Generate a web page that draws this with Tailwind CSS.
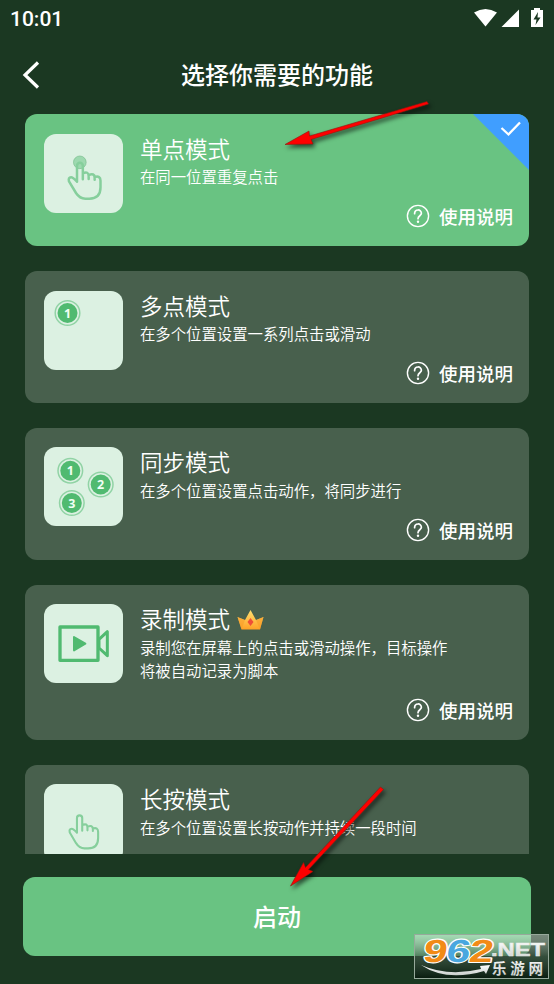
<!DOCTYPE html>
<html lang="zh-CN">
<head>
<meta charset="UTF-8">
<title>选择你需要的功能</title>
<script src="https://cdn.jsdelivr.net/npm/@tailwindcss/browser@4"></script>
</head>
<body class="bg-[#1b3822]">
<svg class="hidden">
  <defs>
    <symbol id="help" viewBox="0 0 24 24">
      <circle cx="12" cy="12" r="10.6" fill="none" stroke="currentColor" stroke-width="1.4"/>
      <path d="M8.600 9.700C8.600 4.800 15.400 4.800 15.400 9.300C15.400 11.800 12 11.800 12 14.700" fill="none" stroke="currentColor" stroke-width="1.700" stroke-linecap="round"/>
      <circle cx="12" cy="17.800" r="1.200" fill="currentColor"/>
    </symbol>
  </defs>
</svg>
<div class="relative w-[554px] h-[984px] overflow-hidden bg-[#1b3822] text-white font-['Noto_Sans_CJK_SC',sans-serif] flex flex-col">
  <header class="flex h-9 shrink-0 items-center justify-between pl-[10px] pr-[9px] pt-[2px]">
    <span class="font-[Roboto,sans-serif] text-[21px] font-medium leading-6">10:01</span>
    <svg class="h-[22px] w-[72px]" viewBox="0 0 72 22" fill="#fff">
      <path d="M1 4.500Q12.500-2.500 24 4.500L12.500 18.500Z"/>
      <path d="M46 1.500V19H28.500Z"/>
      <path fill-rule="evenodd" d="M58 2H61V0H67V2H70V19H58ZM65 4L60.500 11.500H63.500L62.500 17L67.500 9.500H64.500Z"/>
    </svg>
  </header>
  <nav class="grid h-[78px] shrink-0 grid-cols-[60px_1fr_60px] items-center">
    <svg class="ml-[21px] h-8 w-5" viewBox="0 0 20 32" fill="none" stroke="#fff" stroke-width="3.200"><path d="M17 3.500L4 16L17 28.500"/></svg>
    <h1 class="pb-[2px] text-center text-[24px] font-medium leading-8">选择你需要的功能</h1>
  </nav>

  <main class="mx-[25px] flex h-[740px] w-[504px] shrink-0 flex-col gap-[25px] overflow-hidden">
    <section class="relative flex h-[132px] shrink-0 overflow-hidden rounded-xl bg-[#69c382] pl-[19px] pt-5">
      <svg class="size-[79px] shrink-0 rounded-xl bg-[#dcf1e2]" viewBox="72 78 237 237">
        <circle cx="179.500" cy="163" r="19" fill="#9dd9af" stroke="#78bd8c" stroke-width="2"/>
        <path d="M171 221V173A8.700 8.700 0 0 1 188.500 173V214M188.500 196Q206 188 206 205V213M206 201Q224 194 224 209V215M224 207Q241.500 202 241.500 218V238Q241.500 272 208 272H196Q179 272 168 255L147 220Q144 208 153 208Q159 208 171 221" fill="none" stroke="#86cf9c" stroke-width="7.500" stroke-linecap="round" stroke-linejoin="round"/>
      </svg>
      <div class="ml-[17px] flex flex-1 flex-col">
        <h2 class="h-[31px] text-[22.500px] font-[350] leading-[28px]">单点模式</h2>
        <p class="text-[15.380px] font-[350] leading-[23px]">在同一位置重复点击</p>
        <div class="mt-[14px] mr-4 flex h-7 items-center justify-end gap-[9px] text-[18.500px] font-medium leading-7"><svg class="size-6"><use href="#help"/></svg>使用说明</div>
      </div>
      <svg class="absolute right-0 top-0 size-14" viewBox="0 0 56 56"><path d="M0 0H56V56Z" fill="#409eff"/><path d="M28.500 14L35.500 20.500L47 8.500" fill="none" stroke="#fff" stroke-width="2.300"/></svg>
    </section>

    <section class="flex h-[132px] shrink-0 rounded-xl bg-[#48604d] pl-[19px] pt-[19.500px]">
      <svg class="size-[79px] shrink-0 rounded-xl bg-[#dcf1e2] font-['Open_Sans',sans-serif]" viewBox="0 0 79 79">
        <g fill="#50ba70"><circle cx="23.500" cy="22" r="12.300" fill="none" stroke="#91d3a5" stroke-width="1.500"/><circle cx="23.500" cy="22" r="10"/></g>
        <text x="23.500" y="26.500" text-anchor="middle" class="fill-[#f1fff4] text-[12.500px] font-bold">1</text>
      </svg>
      <div class="ml-[17px] flex flex-1 flex-col">
        <h2 class="h-[31px] text-[22.500px] font-[350] leading-[28px]">多点模式</h2>
        <p class="text-[15.380px] font-[350] leading-[23px]">在多个位置设置一系列点击或滑动</p>
        <div class="mt-[14px] mr-4 flex h-7 items-center justify-end gap-[9px] text-[18.500px] font-medium leading-7"><svg class="size-6"><use href="#help"/></svg>使用说明</div>
      </div>
    </section>

    <section class="flex h-[132px] shrink-0 rounded-xl bg-[#48604d] pl-[19px] pt-[19px]">
      <svg class="size-[79px] shrink-0 rounded-xl bg-[#dcf1e2] font-['Open_Sans',sans-serif]" viewBox="0 0 79 79">
        <g fill="none" stroke="#91d3a5" stroke-width="1.500"><circle cx="26.300" cy="23.700" r="12.300"/><circle cx="56.700" cy="37.500" r="12.300"/><circle cx="27.800" cy="56" r="12.300"/></g>
        <g fill="#50ba70"><circle cx="26.300" cy="23.700" r="10"/><circle cx="56.700" cy="37.500" r="10"/><circle cx="27.800" cy="56" r="10"/></g>
        <g text-anchor="middle" class="fill-[#f1fff4] text-[12.500px] font-bold"><text x="26.300" y="28.200">1</text><text x="56.700" y="42">2</text><text x="27.800" y="60.500">3</text></g>
      </svg>
      <div class="ml-[17px] flex flex-1 flex-col">
        <h2 class="h-8 text-[22.500px] font-[350] leading-[28px]">同步模式</h2>
        <p class="text-[15.380px] font-[350] leading-[23px]">在多个位置设置点击动作，将同步进行</p>
        <div class="mt-[14px] mr-4 flex h-7 items-center justify-end gap-[9px] text-[18.500px] font-medium leading-7"><svg class="size-6"><use href="#help"/></svg>使用说明</div>
      </div>
    </section>

    <section class="flex h-[155px] shrink-0 rounded-xl bg-[#48604d] pl-[19px] pt-[19px]">
      <svg class="size-[79px] shrink-0 rounded-xl bg-[#dcf1e2]" viewBox="72 72 237 237">
        <path d="M120 141H234V241H120Z" fill="none" stroke="#50ba70" stroke-width="10" stroke-linejoin="round"/>
        <path d="M237 178L262 155V227L237 204Z" fill="none" stroke="#50ba70" stroke-width="9" stroke-linejoin="round"/>
        <path d="M162 171L196 191L162 211Z" fill="#50ba70" stroke="#50ba70" stroke-width="6" stroke-linejoin="round"/>
      </svg>
      <div class="ml-[17px] flex flex-1 flex-col">
        <h2 class="flex h-8 items-start gap-[7px] text-[22.500px] font-[350] leading-[28px]">录制模式
          <svg class="mt-[5px] h-[22px] w-[27px]" viewBox="0 0 27 22">
            <defs><linearGradient id="gold" x2="0" y2="1"><stop stop-color="#ffdf70"/><stop offset="1" stop-color="#ffa126"/></linearGradient></defs>
            <path d="M.5 8L8 11L13.500 1L19 11L26.500 8L23 20.500H4.500Z" fill="url(#gold)"/>
            <path d="M.5 8L8 11L4.500 20.500ZM26.500 8L19 11L23 20.500Z" fill="#f79b26" opacity=".55"/>
            <path d="M13.500 9L16.500 13L13.500 17L10.500 13Z" fill="#ef4e38"/>
          </svg>
        </h2>
        <p class="text-[15.380px] font-[350] leading-[23px]">录制您在屏幕上的点击或滑动操作，目标操作<br>将被自动记录为脚本</p>
        <div class="mt-[14px] mr-4 flex h-7 items-center justify-end gap-[9px] text-[18.500px] font-medium leading-7"><svg class="size-6"><use href="#help"/></svg>使用说明</div>
      </div>
    </section>

    <section class="flex h-[132px] shrink-0 rounded-xl bg-[#48604d] pl-[19px] pt-[19px]">
      <svg class="size-[79px] shrink-0 rounded-xl bg-[#dcf1e2]" viewBox="72 87 237 237">
        <path transform="translate(17 30) scale(.9 .92)" d="M171 221V173A8.700 8.700 0 0 1 188.500 173V214M188.500 196Q206 188 206 205V213M206 201Q224 194 224 209V215M224 207Q241.500 202 241.500 218V238Q241.500 272 208 272H196Q179 272 168 255L147 220Q144 208 153 208Q159 208 171 221" fill="none" stroke="#86cf9c" stroke-width="7" stroke-linecap="round" stroke-linejoin="round"/>
      </svg>
      <div class="ml-[17px]">
        <h2 class="h-8 text-[22.500px] font-[350] leading-[28px]">长按模式</h2>
        <p class="text-[15.380px] font-[350] leading-[23px]">在多个位置设置长按动作并持续一段时间</p>
      </div>
    </section>
  </main>

  <button class="mx-[23px] mt-[23px] h-[79px] w-[508px] shrink-0 rounded-xl bg-[#69c382] pb-[2px] text-[24px] font-medium">启动</button>

  <svg class="pointer-events-none absolute inset-0 h-full w-full [filter:drop-shadow(2px_3px_2px_rgb(0_0_0/.6))]" viewBox="0 0 554 984">
    <g fill="#fe0000" stroke="#8f160e" stroke-width=".6">
      <path d="M285 144.500L309 131L309.500 136L427 101.500L428.500 104L311 139.500L313 144Z"/>
      <path d="M290.500 886L303.500 862.500L305.500 867.500L380.500 787L383.500 789.500L308.500 869.500L313 871.500Z"/>
    </g>
  </svg>

  <svg class="absolute left-[414px] top-[934px] h-[45px] w-[135px]" viewBox="0 0 135 45">
    <defs>
      <linearGradient id="plate" x2="0" y2="1"><stop stop-color="#fff" stop-opacity=".4"/><stop offset=".5" stop-color="#425949" stop-opacity=".65"/><stop offset="1" stop-color="#07190d" stop-opacity=".9"/></linearGradient>
      <linearGradient id="silver" x2="0" y2="1"><stop stop-color="#fff"/><stop offset="1" stop-color="#c9cecb"/></linearGradient>
    </defs>
    <rect x=".5" y=".5" width="134" height="44" fill="url(#plate)" stroke="#97a99b"/>
    <path d="M7 31Q34 43 67 35L66 32L76 31L72 40L70 37Q32 48 7 31Z" fill="url(#silver)"/>
    <g class="font-['Liberation_Sans',sans-serif] font-bold" transform="translate(8 27.500) skewX(-9)" stroke="#fff" stroke-width="2.200" paint-order="stroke" stroke-linejoin="round">
      <text x="0" y="0" font-size="32" textLength="24" lengthAdjust="spacingAndGlyphs" fill="#f28b16">9</text>
      <text x="23" y="0" font-size="32" textLength="24" lengthAdjust="spacingAndGlyphs" fill="#49a7df">6</text>
      <text x="46" y="0" font-size="32" textLength="24" lengthAdjust="spacingAndGlyphs" fill="#f28b16">2</text>
    </g>
    <text x="77" y="22" font-size="17.500" textLength="54" lengthAdjust="spacingAndGlyphs" class="font-['Liberation_Sans',sans-serif] font-bold" fill="url(#silver)" stroke="#e8ebe9" stroke-width=".5">.NET</text>
    <text x="78" y="39.500" font-size="14.500" textLength="51" class="font-bold" fill="url(#silver)">乐游网</text>
  </svg>
</div>
</body>
</html>
